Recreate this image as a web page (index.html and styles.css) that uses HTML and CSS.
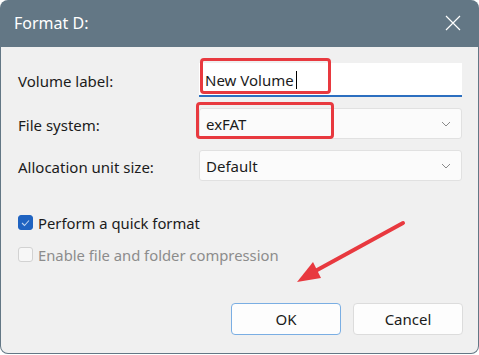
FILE: index.html
```html
<!DOCTYPE html>
<html lang="en">
  <head>
    <meta charset="UTF-8" />
    <title>Format D:</title>
    <link rel="stylesheet" href="styles.css">
  </head>
  <body>
    <div class="window">
      <!-- [1] Title bar -->
      <header class="titlebar">
        <h1>Format D:</h1>
        <svg class="close" width="16" height="16" viewBox="0 0 16 16" aria-hidden="true">
          <path d="M1 1 L15 15 M15 1 L1 15" stroke="#fff" stroke-width="1.2" fill="none" />
        </svg>
      </header>

      <!-- [2] Dialog body -->
      <div class="dialog">
        <div class="fields">
          <label>Volume label:</label>
          <div class="control">
            <div class="input">New Volume<span class="caret"></span></div>
            <span class="mark mark-label"></span>
          </div>

          <label>File system:</label>
          <div class="control">
            <div class="select">exFAT<svg class="chevron" width="10" height="6" viewBox="0 0 10 6"><path d="M1 1 L5 5 L9 1" stroke="#8a8a8a" fill="none" /></svg></div>
            <span class="mark mark-fs"></span>
          </div>

          <label>Allocation unit size:</label>
          <div class="control">
            <div class="select">Default<svg class="chevron" width="10" height="6" viewBox="0 0 10 6"><path d="M1 1 L5 5 L9 1" stroke="#8a8a8a" fill="none" /></svg></div>
          </div>
        </div>

        <div class="checks">
          <div class="check">
            <span class="box checked">
              <svg width="9" height="8" viewBox="0 0 9 8"><path d="M1 4 L3.5 6.5 L8 1.5" stroke="#bcd3f0" stroke-width="1.1" fill="none" /></svg>
            </span>
            Perform a quick format
          </div>
          <div class="check disabled">
            <span class="box"></span>
            Enable file and folder compression
          </div>
        </div>

        <div class="buttons">
          <button class="btn default">OK</button>
          <button class="btn">Cancel</button>
        </div>

        <svg class="arrow" width="479" height="355" viewBox="0 0 479 355" aria-hidden="true">
          <path d="M403 223 L308 275" stroke="#e8393f" stroke-width="4" stroke-linecap="round" fill="none" />
          <path d="M297 282 L313 262 L321 278 Z" fill="#e8393f" />
        </svg>
      </div>
    </div>
  </body>
</html>
```

FILE: styles.css
```css
/*
  Global styles
*/

* {
  margin: 0;
  padding: 0;
  box-sizing: border-box;
}
:root {
  --frame: #637785;
  --face: #f0f0f0;
  --text: #1b1b1b;
  --muted: #8c8c8c;
  --accent: #1f63c1;
  --red: #e8393f;
}
body {
  width: 479px;
  height: 355px;
  background-color: #fff;
  font-family: "Noto Sans", "Open Sans", sans-serif;
  font-size: 15px;
  color: var(--text);
}

/*
  Window
*/

.window {
  width: 479px;
  height: 354px;
  display: flex;
  flex-direction: column;
  border-radius: 8px;
  background-color: var(--frame);
  padding: 0 1px 1px;
  overflow: hidden;
}
.titlebar {
  height: 47px;
  display: flex;
  align-items: center;
  justify-content: space-between;
  padding: 0 17px 1px 13px;
  color: #fff;
}
.titlebar h1 {
  font-size: 16px;
  font-weight: 400;
}
.dialog {
  flex: 1;
  position: relative;
  padding: 16px 15px 0 17px;
  border-radius: 0 0 7px 7px;
  background-color: var(--face);
}

/* [1] Fields */
.fields {
  display: grid;
  grid-template-columns: 181px 263px;
  grid-template-rows: 34px 31px 31px;
  row-gap: 11px;
  align-items: center;
}
.fields label {
  padding-top: 2px;
}
.control {
  position: relative;
  height: 100%;
}
.input,
.select {
  height: 100%;
  display: flex;
  align-items: center;
  padding: 0 6px;
  font-size: 15px;
}
.input {
  padding-top: 1px;
  background-color: #fff;
  border-bottom: 2px solid #2c6fc0;
}
.caret {
  width: 1px;
  height: 18px;
  margin-left: 2px;
  background-color: #000;
}
.select {
  justify-content: space-between;
  padding-right: 10px;
  border: 1px solid #e1e1e1;
  border-radius: 3px;
  background-color: #fbfbfb;
}
.mark {
  position: absolute;
  border: 3px solid var(--red);
  border-radius: 4px;
}
.mark-label {
  left: 1px;
  top: -5px;
  width: 131px;
  height: 36px;
}
.mark-fs {
  left: -3px;
  top: -6px;
  width: 138px;
  height: 37px;
}

/* [2] Checkboxes */
.checks {
  display: flex;
  flex-direction: column;
  gap: 15px;
  margin-top: 33px;
  font-size: 14.8px;
}
.check {
  display: flex;
  align-items: center;
  gap: 5px;
  height: 17px;
}
.box {
  width: 15px;
  height: 15px;
  display: grid;
  place-items: center;
  border-radius: 3px;
  border: 1px solid #d2d2d2;
  background-color: #f7f7f7;
}
.box.checked {
  border-color: var(--accent);
  background-color: var(--accent);
}
.check.disabled {
  color: var(--muted);
}

/* [3] Buttons */
.buttons {
  display: flex;
  justify-content: flex-end;
  gap: 12px;
  margin-top: 40px;
}
.btn {
  width: 110px;
  height: 32px;
  font-family: inherit;
  font-size: 15px;
  color: var(--text);
  border-radius: 4px;
  border: 1px solid #dcdcdc;
  background-color: #fdfdfd;
}
.btn.default {
  border-color: #7aaee3;
}
.arrow {
  position: absolute;
  left: -1px;
  top: -47px;
  pointer-events: none;
}
```
